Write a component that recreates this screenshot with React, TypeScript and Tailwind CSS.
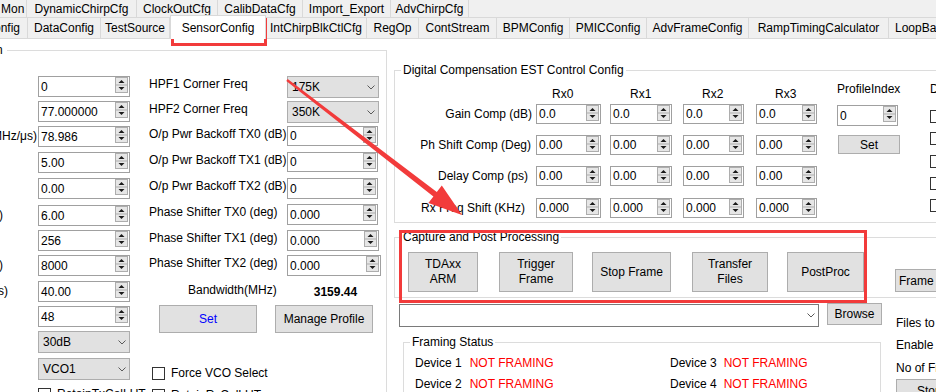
/**
 * SensorConfig -- mmWave Studio style sensor configuration tab, with review annotations.
 */

// ---------------------------------------------------------------------------
// Small controls
// ---------------------------------------------------------------------------

function Spinner() {
  return (
    <svg width="13" height="16" viewBox="0 0 13 16" className="block" aria-hidden="true">
      <rect x="0.5" y="0.5" width="12" height="15" fill="#e6e6e6" stroke="#adadad" />
      <line x1="1" y1="8" x2="12" y2="8" stroke="#adadad" />
      <path d="M3.5 6h6l-3-3z" fill="#1a1a1a" />
      <path d="M3.5 10h6l-3 3z" fill="#1a1a1a" />
    </svg>
  );
}

function Chevron() {
  return (
    <svg width="8" height="5" viewBox="0 0 8 5" className="block" aria-hidden="true">
      <path d="M0.5 0.5L4 4L7.5 0.5" fill="none" stroke="#5a5a5a" />
    </svg>
  );
}

interface BoxProps {
  v: string;
  className?: string;
}

function Spin({ v, className = "" }: BoxProps) {
  return (
    <div
      className={[
        "flex shrink-0 items-center justify-between border border-[#a0a0a0] bg-white pl-[2px] pr-[1px]",
        className,
      ].join(" ")}
    >
      <span className="whitespace-nowrap">{v}</span>
      <span className="self-start">
        <Spinner />
      </span>
    </div>
  );
}

function Combo({ v, className = "" }: BoxProps) {
  return (
    <div
      className={[
        "flex shrink-0 items-center justify-between border border-[#adadad] bg-[#e1e1e1] pl-[4px] pr-[3px]",
        className,
      ].join(" ")}
    >
      <span className="whitespace-nowrap">{v}</span>
      <Chevron />
    </div>
  );
}

function Btn({ children, className = "" }: { children: React.ReactNode; className?: string }) {
  return (
    <div
      className={[
        "flex shrink-0 items-center border border-[#adadad] bg-[#e1e1e1] text-center",
        className,
      ].join(" ")}
    >
      {children}
    </div>
  );
}

function Check() {
  return <span className="block h-[13px] w-[13px] shrink-0 border border-[#333] bg-white" />;
}

// ---------------------------------------------------------------------------
// Tabs
// ---------------------------------------------------------------------------

const tabRow1: [string, string][] = [
  ["Mon", "w-[27px] justify-start pl-[1px]"],
  ["DynamicChirpCfg", "w-[110px] justify-center"],
  ["ClockOutCfg", "w-[81px] justify-center"],
  ["CalibDataCfg", "w-[85px] justify-center"],
  ["Import_Export", "w-[88px] justify-center"],
  ["AdvChirpCfg", "w-[78px] justify-center"],
];

const tabRow2Left: [string, string][] = [
  ["StaticConfig", "w-[28px] justify-end pr-[7px]"],
  ["DataConfig", "w-[73px] justify-center"],
  ["TestSource", "w-[69px] justify-center"],
];

const tabRow2Right: [string, string][] = [
  ["IntChirpBlkCtlCfg", "w-[101px] justify-center"],
  ["RegOp", "w-[52px] justify-center"],
  ["ContStream", "w-[78px] justify-center"],
  ["BPMConfig", "w-[73px] justify-center"],
  ["PMICConfig", "w-[77px] justify-center"],
  ["AdvFrameConfig", "w-[102px] justify-center"],
  ["RampTimingCalculator", "w-[140px] justify-center"],
  ["LoopBackCfg", "w-[80px] justify-start pl-[6px]"],
];

function Tab({ name, cls }: { name: string; cls: string }) {
  return (
    <div className={["flex shrink-0 items-center overflow-hidden border-r border-[#d9d9d9]", cls].join(" ")}>
      <span className="shrink-0 whitespace-nowrap">{name}</span>
    </div>
  );
}

function Tabs() {
  return (
    <div className="bg-[#f0f0f0]">
      <div className="flex h-[18px] border-b border-[#d9d9d9]">
        {tabRow1.map(([n, c]) => (
          <Tab key={n} name={n} cls={c} />
        ))}
      </div>
      <div className="flex h-[21px]">
        {tabRow2Left.map(([n, c]) => (
          <Tab key={n} name={n} cls={[c, "border-b"].join(" ")} />
        ))}
        <div className="relative z-10 -mt-[3px] flex h-[24px] w-[96px] shrink-0 items-center justify-center border-x border-t border-[#d9d9d9] bg-white">
          SensorConfig
        </div>
        {tabRow2Right.map(([n, c]) => (
          <Tab key={n} name={n} cls={[c, "border-b"].join(" ")} />
        ))}
      </div>
    </div>
  );
}

// ---------------------------------------------------------------------------
// Left: profile group
// ---------------------------------------------------------------------------

const leftRows = [
  { v: "0", mt: "", label: "", pr: "" },
  { v: "77.000000", mt: "mt-[4px]", label: "", pr: "" },
  { v: "78.986", mt: "mt-[4px]", label: "Frequency Slope (MHz/μs)", pr: "pr-[1px]" },
  { v: "5.00", mt: "mt-[5px]", label: "", pr: "" },
  { v: "0.00", mt: "mt-[5px]", label: "", pr: "" },
  { v: "6.00", mt: "mt-[6px]", label: "ADC Start Time (μs)", pr: "pr-[35px]" },
  { v: "256", mt: "mt-[4px]", label: "", pr: "" },
  { v: "8000", mt: "mt-[4px]", label: "Sample Rate (ksps)", pr: "pr-[35px]" },
  { v: "40.00", mt: "mt-[5px]", label: "Ramp End Time (μs)", pr: "pr-[30px]" },
  { v: "48", mt: "mt-[4px]", label: "", pr: "" },
];

const midRows = [
  { label: "HPF1 Corner Freq", v: "175K", combo: true, mt: "", box: "h-[22px] w-[92px]" },
  { label: "HPF2 Corner Freq", v: "350K", combo: true, mt: "mt-[3px]", box: "h-[22px] w-[92px]" },
  { label: "O/p Pwr Backoff TX0 (dB)", v: "0", combo: false, mt: "mt-[3px]", box: "h-[20px] w-[91px]" },
  { label: "O/p Pwr Backoff TX1 (dB)", v: "0", combo: false, mt: "mt-[6px]", box: "h-[20px] w-[91px]" },
  { label: "O/p Pwr Backoff TX2 (dB)", v: "0", combo: false, mt: "mt-[6px]", box: "h-[21px] w-[91px]" },
  { label: "Phase Shifter TX0 (deg)", v: "0.000", combo: false, mt: "mt-[5px]", box: "h-[21px] w-[91px]" },
  { label: "Phase Shifter TX1 (deg)", v: "0.000", combo: false, mt: "mt-[5px]", box: "h-[21px] w-[92px]" },
  { label: "Phase Shifter TX2 (deg)", v: "0.000", combo: false, mt: "mt-[4px]", box: "h-[21px] w-[94px]" },
];

function LeftPanel() {
  return (
    <fieldset className="-ml-[5px] mt-[4px] h-[380px] w-[392px] shrink-0 border border-[#dcdcdc]">
      <legend className="pr-[4px]">n</legend>
      <div className="flex items-start pt-[19px]">
        {/* Profile values */}
        <div className="flex w-[134px] shrink-0 flex-col">
          {leftRows.map((r, i) => (
            <div key={i} className={["flex h-[21px] items-center", r.mt].join(" ")}>
              <div className={["flex h-full w-[42px] items-center justify-end overflow-hidden pb-[2px]", r.pr].join(" ")}>
                <span className="shrink-0 whitespace-nowrap">{r.label}</span>
              </div>
              <Spin v={r.v} className="h-[21px] w-[92px]" />
            </div>
          ))}
          <div className="mt-[4px] flex pl-[42px]">
            <Combo v="30dB" className="h-[22px] w-[92px]" />
          </div>
          <div className="mt-[5px] flex pl-[42px]">
            <Combo v="VCO1" className="h-[22px] w-[92px]" />
          </div>
          <div className="mt-[7px] flex items-center pl-[42px]">
            <Check />
            <span className="ml-[6px] whitespace-nowrap">RetainTxCalLUT</span>
          </div>
        </div>

        {/* HPF / backoff / phase shifter */}
        <div className="ml-[19px] flex w-[232px] shrink-0 flex-col">
          {midRows.map((r) => (
            <div key={r.label} className={["flex items-start", r.mt].join(" ")}>
              <span className="w-[138px] shrink-0 whitespace-nowrap pt-[1px]">{r.label}</span>
              {r.combo ? <Combo v={r.v} className={r.box} /> : <Spin v={r.v} className={r.box} />}
            </div>
          ))}
          <div className="mt-[7px] flex items-start">
            <span className="ml-[39px] whitespace-nowrap">Bandwidth(MHz)</span>
            <span className="ml-[37px] mt-[2px] font-bold">3159.44</span>
          </div>
          <div className="mt-[6px] flex">
            <Btn className="ml-[10px] h-[28px] w-[98px] justify-center text-[#0000ff]">Set</Btn>
            <Btn className="ml-[18px] h-[28px] w-[98px] justify-center">Manage Profile</Btn>
          </div>
          <div className="ml-[3px] mt-[33px] flex items-center">
            <Check />
            <span className="ml-[6px] whitespace-nowrap">Force VCO Select</span>
          </div>
          <div className="ml-[3px] mt-[8px] flex items-center">
            <Check />
            <span className="ml-[6px] whitespace-nowrap">RetainRxCalLUT</span>
          </div>
        </div>
      </div>
    </fieldset>
  );
}

// ---------------------------------------------------------------------------
// Right: digital compensation, capture, framing status
// ---------------------------------------------------------------------------

const dcCols = [
  { name: "Rx0", track: "w-[74px]", spin: "w-[65px]", head: "pl-[16px]" },
  { name: "Rx1", track: "w-[73px]", spin: "w-[62px]", head: "pl-[20px]" },
  { name: "Rx2", track: "w-[73px]", spin: "w-[61px]", head: "pl-[19px]" },
  { name: "Rx3", track: "w-[81px]", spin: "w-[61px]", head: "pl-[19px]" },
];

const dcRows = [
  { label: "Gain Comp (dB)", pr: "pr-[4px]", v: "0.0", mt: "mt-[3px]" },
  { label: "Ph Shift Comp (Deg)", pr: "pr-[5px]", v: "0.00", mt: "mt-[11px]" },
  { label: "Delay Comp (ps)", pr: "pr-[8px]", v: "0.00", mt: "mt-[11px]" },
  { label: "Rx Freq Shift (KHz)", pr: "pr-[11px]", v: "0.000", mt: "mt-[12px]" },
];

function DigitalComp() {
  return (
    <fieldset className="mt-[24px] border border-[#dcdcdc] pb-[4px]">
      <legend className="ml-[6px] px-[2px]">Digital Compensation EST Control Config</legend>
      <div className="flex items-start">
        <div className="flex shrink-0 flex-col">
          <div className="mt-[10px] flex h-[14px]">
            <div className="w-[141px] shrink-0" />
            {dcCols.map((c) => (
              <div key={c.name} className={["shrink-0", c.track, c.head].join(" ")}>
                {c.name}
              </div>
            ))}
          </div>
          {dcRows.map((r) => (
            <div key={r.label} className={["flex h-[20px] items-center", r.mt].join(" ")}>
              <div className={["w-[141px] shrink-0 whitespace-nowrap text-right", r.pr].join(" ")}>{r.label}</div>
              {dcCols.map((c) => (
                <div key={c.name} className={["shrink-0", c.track].join(" ")}>
                  <Spin v={r.v} className={["h-[20px]", c.spin].join(" ")} />
                </div>
              ))}
            </div>
          ))}
        </div>

        {/* Profile index */}
        <div className="flex w-[93px] shrink-0 flex-col">
          <span className="mt-[5px] whitespace-nowrap">ProfileIndex</span>
          <Spin v="0" className="mt-[9px] h-[21px] w-[61px]" />
          <Btn className="ml-[1px] mt-[9px] h-[19px] w-[62px] justify-center">Set</Btn>
        </div>

        {/* Cut-off checkbox column */}
        <div className="flex shrink-0 flex-col">
          <span className="mt-[5px]">D</span>
          <span className="mt-[14px]"><Check /></span>
          <span className="mt-[9px]"><Check /></span>
          <span className="mt-[10px]"><Check /></span>
          <span className="mt-[9px]"><Check /></span>
          <span className="mt-[9px]"><Check /></span>
        </div>
      </div>
    </fieldset>
  );
}

function Capture() {
  return (
    <fieldset className="mt-[7px] border border-[#dcdcdc] pb-[5px]">
      <legend className="ml-[6px] px-[2px]">Capture and Post Processing</legend>
      <div className="mt-[8px] flex items-start">
        <Btn className="ml-[13px] h-[40px] w-[70px] justify-center leading-[15px]">
          TDAxx
          <br />
          ARM
        </Btn>
        <Btn className="ml-[21px] h-[40px] w-[74px] justify-center leading-[15px]">
          Trigger
          <br />
          Frame
        </Btn>
        <Btn className="ml-[19px] h-[40px] w-[79px] justify-center">Stop Frame</Btn>
        <Btn className="ml-[21px] h-[40px] w-[76px] justify-center leading-[15px]">
          Transfer
          <br />
          Files
        </Btn>
        <Btn className="ml-[19px] h-[40px] w-[77px] justify-center">PostProc</Btn>
        <Btn className="ml-[31px] mt-[17px] h-[23px] w-[80px] justify-start whitespace-nowrap pl-[3px]">
          Frame Config
        </Btn>
      </div>
    </fieldset>
  );
}

function DeviceRow({ a, b, mt }: { a: string; b: string; mt: string }) {
  return (
    <div className={["flex pl-[11px]", mt].join(" ")}>
      <div className="flex w-[255px] shrink-0">
        <span>{a}</span>
        <span className="ml-[8px] text-[#ff0000]">NOT FRAMING</span>
      </div>
      <div className="flex shrink-0">
        <span>{b}</span>
        <span className="ml-[7px] text-[#ff0000]">NOT FRAMING</span>
      </div>
    </div>
  );
}

function RightPanel() {
  return (
    <div className="ml-[7px] flex w-[570px] shrink-0 flex-col">
      <DigitalComp />
      <Capture />
      <div className="flex items-start">
        <div className="flex w-[501px] shrink-0 flex-col">
          <div className="mt-[6px] flex items-start">
            <div className="ml-[5px] flex h-[23px] w-[420px] items-center justify-end border border-[#7a7a7a] bg-white pr-[3px]">
              <Chevron />
            </div>
            <Btn className="-mt-[1px] ml-[8px] h-[22px] w-[55px] justify-center">Browse</Btn>
          </div>
          <fieldset className="ml-[9px] mt-[8px] h-[70px] w-[478px] border border-[#dcdcdc]">
            <legend className="ml-[6px] px-[2px]">Framing Status</legend>
            <DeviceRow a="Device 1" b="Device 3" mt="mt-[7px]" />
            <DeviceRow a="Device 2" b="Device 4" mt="mt-[7px]" />
          </fieldset>
        </div>
        <div className="flex shrink-0 flex-col whitespace-nowrap pl-[1px]">
          <span className="mt-[18px]">Files to Capture</span>
          <span className="mt-[8px]">Enable Trigger</span>
          <span className="mt-[9px]">No of Frames</span>
          <Btn className="mt-[4px] h-[23px] w-[80px] justify-start pl-[20px]">Stop Capture</Btn>
        </div>
      </div>
    </div>
  );
}

// ---------------------------------------------------------------------------
// Red review marks drawn over the screenshot
// ---------------------------------------------------------------------------

function Annotations() {
  return (
    <>
      <div className="pointer-events-none absolute left-[171px] top-[18px] h-[28px] w-[96px] border-[3px] border-[#f23b3b]" />
      <div className="pointer-events-none absolute left-[399px] top-[230px] h-[73px] w-[468px] border-[3px] border-[#f23b3b]" />
      <svg
        className="pointer-events-none absolute left-0 top-0"
        width="936"
        height="392"
        viewBox="0 0 936 392"
        aria-hidden="true"
      >
        <polygon
          points="287.7,79 436.8,192 441.8,185.5 462,215 428.4,202.9 433.4,196.4 286.3,81"
          fill="#f23b3b"
        />
      </svg>
    </>
  );
}

export default function App() {
  return (
    <div className="relative h-[392px] w-[936px] overflow-hidden bg-white font-['Liberation_Sans',Arial,sans-serif] text-[12px] leading-[14px] text-black">
      <Tabs />
      <div className="flex items-start">
        <LeftPanel />
        <RightPanel />
      </div>
      <Annotations />
    </div>
  );
}
